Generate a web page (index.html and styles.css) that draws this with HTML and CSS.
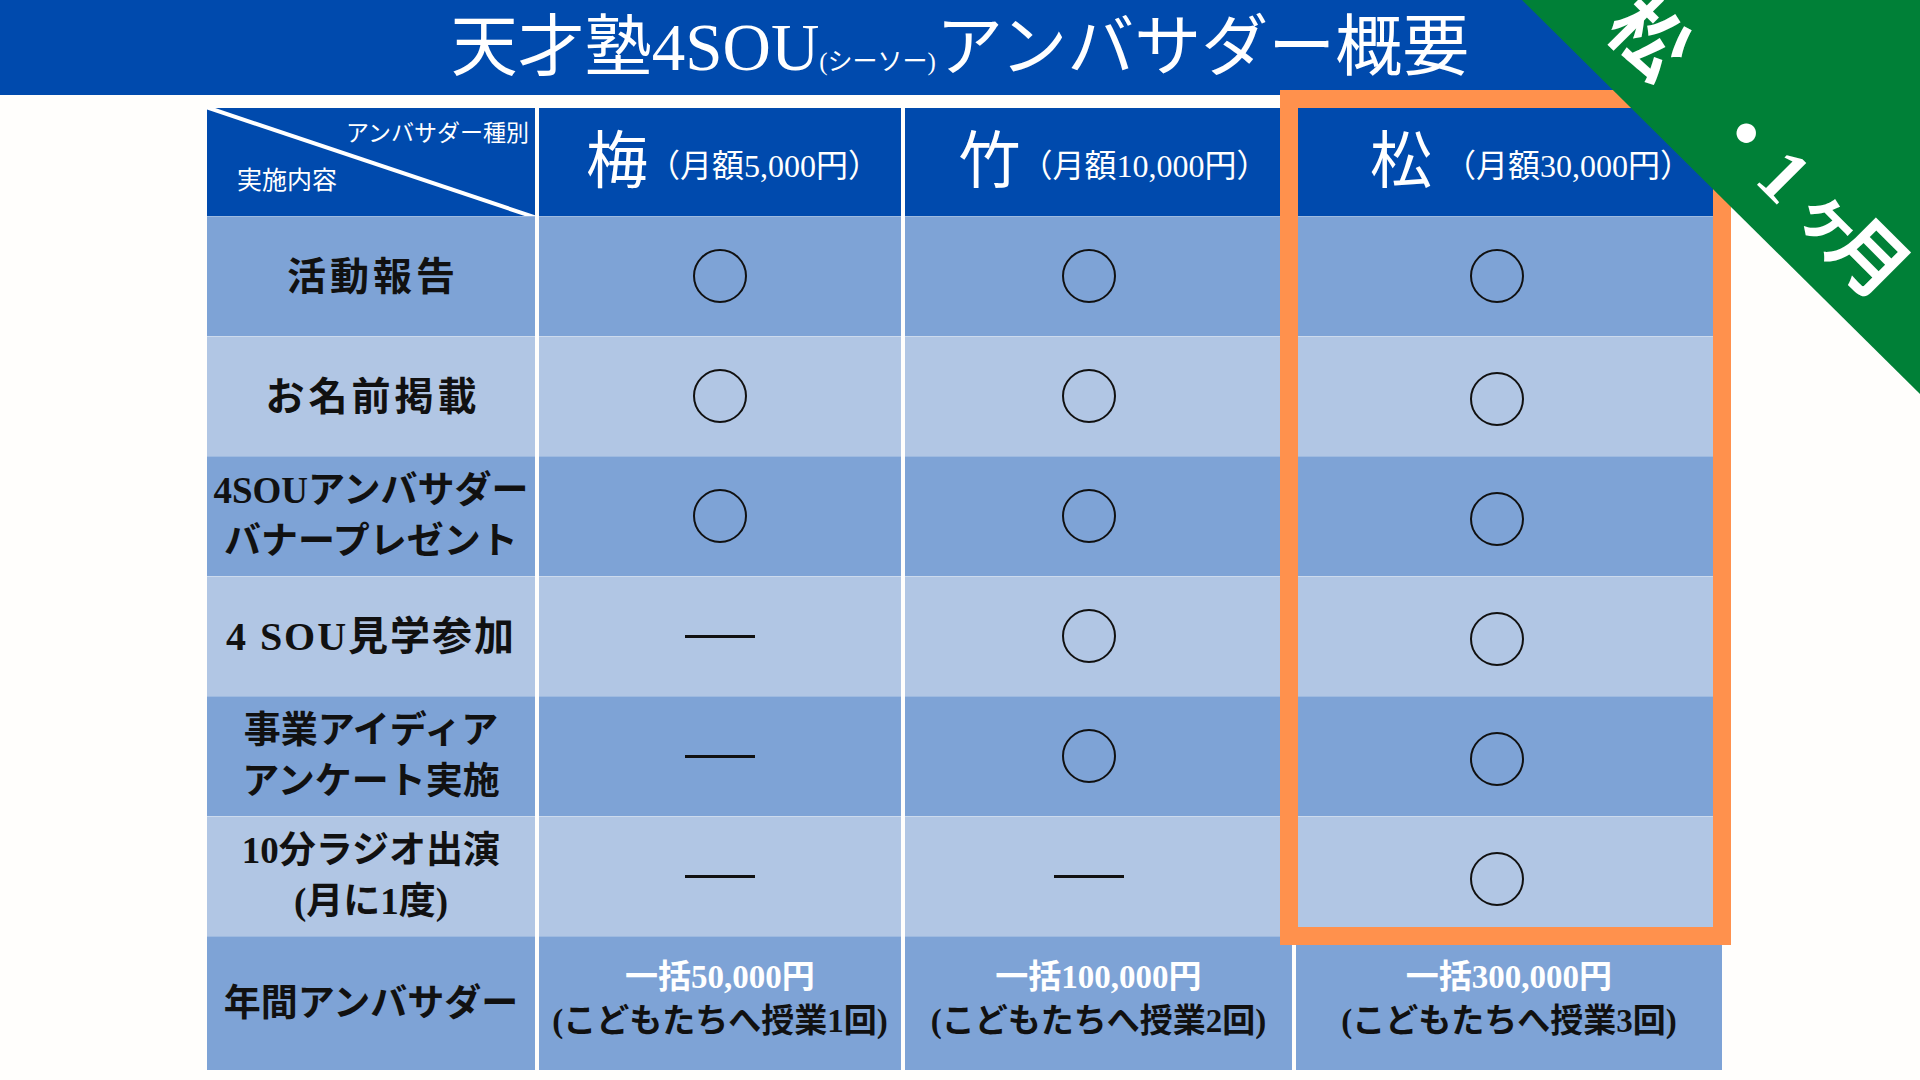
FILE: index.html
```html
<!DOCTYPE html>
<html lang="ja">
<head>
<meta charset="utf-8">
<title>天才塾4SOUアンバサダー概要</title>
<link rel="stylesheet" href="styles.css">
</head>
<body>
<div class="page">
  <header class="titlebar">
    <h1 class="title">天才塾4SOU<span class="title-small">(シーソー)</span>アンバサダー概要</h1>
  </header>

  <div class="table">
    <!-- header row -->
    <div class="cell corner">
      <svg class="corner-line" viewBox="0 0 328 108" preserveAspectRatio="none"><line x1="-4" y1="-2" x2="330" y2="110" stroke="#ffffff" stroke-width="4"/></svg>
      <span class="corner-top">アンバサダー種別</span>
      <span class="corner-bottom">実施内容</span>
    </div>
    <div class="cell head head-ume"><span class="plan">梅</span><span class="price">（月額5,000円）</span></div>
    <div class="cell head head-take"><span class="plan">竹</span><span class="price">（月額10,000円）</span></div>
    <div class="cell head head-matsu"><span class="plan">松</span><span class="price">（月額30,000円）</span></div>

    <!-- row 1 -->
    <div class="cell label dark wide">活動報告</div>
    <div class="cell dark"><span class="maru"></span></div>
    <div class="cell dark col3"><span class="maru"></span></div>
    <div class="cell dark col4"><span class="maru"></span></div>

    <!-- row 2 -->
    <div class="cell label light wide">お名前掲載</div>
    <div class="cell light"><span class="maru"></span></div>
    <div class="cell light col3"><span class="maru"></span></div>
    <div class="cell light col4"><span class="maru low"></span></div>

    <!-- row 3 -->
    <div class="cell label dark two">4SOUアンバサダー<br>バナープレゼント</div>
    <div class="cell dark"><span class="maru"></span></div>
    <div class="cell dark col3"><span class="maru"></span></div>
    <div class="cell dark col4"><span class="maru low"></span></div>

    <!-- row 4 -->
    <div class="cell label light big">4 SOU見学参加</div>
    <div class="cell light"><span class="dash"></span></div>
    <div class="cell light col3"><span class="maru"></span></div>
    <div class="cell light col4"><span class="maru low"></span></div>

    <!-- row 5 -->
    <div class="cell label dark two">事業アイディア<br>アンケート実施</div>
    <div class="cell dark"><span class="dash"></span></div>
    <div class="cell dark col3"><span class="maru"></span></div>
    <div class="cell dark col4"><span class="maru low"></span></div>

    <!-- row 6 -->
    <div class="cell label light two">10分ラジオ出演<br>(月に1度)</div>
    <div class="cell light"><span class="dash"></span></div>
    <div class="cell light col3"><span class="dash"></span></div>
    <div class="cell light col4"><span class="maru low"></span></div>

    <!-- row 7 -->
    <div class="cell label dark last">年間アンバサダー</div>
    <div class="cell dark last"><div class="annual"><span class="annual-price">一括50,000円</span><span class="annual-note">(こどもたちへ授業1回)</span></div></div>
    <div class="cell dark last"><div class="annual"><span class="annual-price">一括100,000円</span><span class="annual-note">(こどもたちへ授業2回)</span></div></div>
    <div class="cell dark last"><div class="annual"><span class="annual-price">一括300,000円</span><span class="annual-note">(こどもたちへ授業3回)</span></div></div>
  </div>

  <div class="highlight"></div>
  <div class="ribbon"></div>
  <div class="ribbon-text"><span class="rb-matsu">松</span><span class="rb-dot">・</span><span class="rb-one">1</span><span class="rb-ke">ヶ</span><span class="rb-tsuki">月</span></div>
</div>
</body>
</html>
```

FILE: styles.css
```css
* { box-sizing: border-box; }

html, body {
  margin: 0;
  padding: 0;
}

body {
  width: 1920px;
  height: 1080px;
  overflow: hidden;
  background: #fffefc;
  font-family: "Liberation Serif", "Noto Sans CJK JP", serif;
}

.page {
  position: relative;
  width: 1920px;
  height: 1080px;
  overflow: hidden;
}

.titlebar {
  height: 95px;
  background: #004aad;
  display: flex;
  align-items: center;
  justify-content: center;
}

.title {
  margin: 0;
  color: #ffffff;
  font-weight: 400;
  font-size: 67px;
  line-height: 1;
  white-space: nowrap;
}

.title-small {
  font-size: 25px;
}

.table {
  margin: 13px 0 0 207px;
  width: 1515px;
  display: grid;
  grid-template-columns: 328px 362px 387px 426px;
  grid-template-rows: 108px repeat(6, 120px) 134px;
  column-gap: 4px;
}

.cell {
  display: flex;
  align-items: center;
  justify-content: center;
  text-align: center;
}

.head, .corner {
  background: #004aad;
  color: #ffffff;
}

.dark {
  background: #7ea3d6;
  box-shadow: inset 0 1px 0 rgba(255, 255, 255, 0.25);
}

.light {
  background: #b1c6e4;
  box-shadow: inset 0 1px 0 rgba(255, 255, 255, 0.35);
}

.corner {
  position: relative;
  flex-direction: column;
  align-items: stretch;
  justify-content: space-between;
  padding: 12px 6px 20px 30px;
}

.corner-line {
  position: absolute;
  left: 0;
  top: 0;
  width: 100%;
  height: 100%;
}

.corner-top {
  align-self: flex-end;
  font-size: 23px;
  line-height: 28px;
}

.corner-bottom {
  align-self: flex-start;
  font-size: 25px;
  line-height: 30px;
}

.plan {
  font-size: 62px;
  line-height: 1;
}

.price {
  font-size: 32px;
  line-height: 1;
  margin-top: 8px;
  margin-left: 0;
}

.head-ume {
  padding-left: 26px;
}

.head-take {
  padding-left: 30px;
}

.head-matsu {
  padding-left: 44px;
}

.head-matsu .price {
  margin-left: 12px;
}

.label {
  color: #111111;
  font-weight: 700;
  font-size: 37px;
  line-height: 51px;
}

.label.wide {
  font-size: 39px;
  letter-spacing: 4px;
  padding-left: 4px;
}

.label.big {
  font-size: 40px;
  letter-spacing: 2px;
}

.col3 {
  padding-right: 20px;
}

.col4 {
  padding-right: 24px;
}

.maru {
  display: block;
  width: 54px;
  height: 54px;
  border: 2.5px solid #111111;
  border-radius: 50%;
}

.maru.low {
  margin-top: 6px;
}

.dash {
  display: block;
  width: 70px;
  height: 3px;
  background: #111111;
}

.annual {
  display: flex;
  flex-direction: column;
  align-items: center;
  font-weight: 700;
  font-size: 33px;
  line-height: 44px;
  margin-top: -8px;
}

.annual-price {
  color: #ffffff;
}

.annual-note {
  color: #111111;
}

.highlight {
  position: absolute;
  left: 1280px;
  top: 90px;
  width: 451px;
  height: 855px;
  border: 18px solid #ff914d;
}

.ribbon {
  position: absolute;
  left: 1522px;
  top: 0;
  width: 398px;
  height: 394px;
  background: #008037;
  clip-path: polygon(0 0, 100% 0, 100% 100%);
}

.ribbon-text {
  position: absolute;
  left: 1528px;
  top: 104px;
  width: 460px;
  height: 90px;
  display: flex;
  align-items: center;
  justify-content: center;
  color: #ffffff;
  font-weight: 700;
  font-size: 76px;
  line-height: 1;
  white-space: nowrap;
  transform: rotate(45deg);
  transform-origin: 50% 50%;
}

.rb-matsu {
  margin-right: 60px;
}

.rb-dot {
  margin-right: 0;
}

.rb-one {
  margin-right: 13px;
}

.rb-ke {
  font-size: 64px;
  margin-right: -16px;
}
```
